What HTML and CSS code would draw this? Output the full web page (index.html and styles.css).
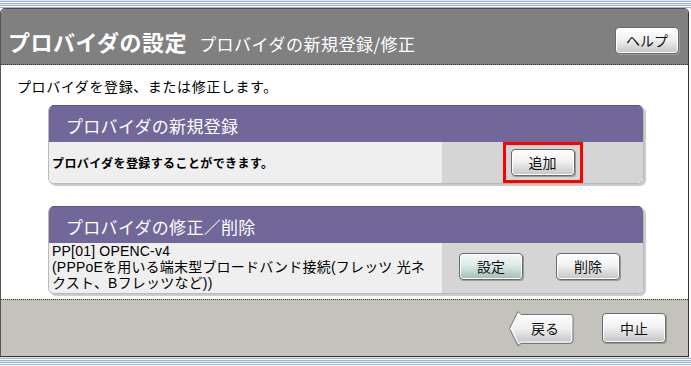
FILE: index.html
```html
<!DOCTYPE html>
<html lang="ja">

<head>
  <meta charset="UTF-8" />
  <meta name="viewport" content="width=device-width, initial-scale=1.0" />
  <title>プロバイダの設定</title>
  <link rel="stylesheet" href="styles.css">
</head>

<body>
  <div class="stripes"></div>

  <div class="window">
    <header class="head">
      <div class="titles">
        <h1>プロバイダの設定</h1>
        <span class="sub">プロバイダの新規登録/修正</span>
      </div>
      <button class="btn help">ヘルプ</button>
    </header>

    <main class="content">
      <p class="lead">プロバイダを登録、または修正します。</p>

      <section class="panel">
        <h2>プロバイダの新規登録</h2>
        <div class="row">
          <div class="info bold">プロバイダを登録することができます。</div>
          <div class="actions center">
            <span class="mark"><button class="btn">追加</button></span>
          </div>
        </div>
      </section>

      <section class="panel second">
        <h2>プロバイダの修正／削除</h2>
        <div class="row">
          <div class="info lines">
            <span>PP[01] OPENC-v4</span>
            <span>(PPPoEを用いる端末型ブロードバンド接続(フレッツ 光ネ</span>
            <span>クスト、Bフレッツなど))</span>
          </div>
          <div class="actions pair">
            <button class="btn teal">設定</button>
            <button class="btn">削除</button>
          </div>
        </div>
      </section>
    </main>

    <footer class="foot">
      <button class="back">
        <svg width="66" height="37" viewBox="0 0 66 37">
          <defs>
            <linearGradient id="g" x1="0" y1="0" x2="0" y2="1">
              <stop offset="0" stop-color="#ffffff" />
              <stop offset="0.5" stop-color="#f0f0f0" />
              <stop offset="1" stop-color="#b9b9b9" />
            </linearGradient>
          </defs>
          <path d="M1.5 18.5 L10 1.5 L13 4.5 L62 4.5 Q65 4.5 65 7.5 L65 30.5 Q65 33.5 62 33.5 L13 33.5 L10 36 Z"
            fill="url(#g)" stroke="#777" stroke-width="1" />
          <path d="M3.5 18.5 L10.5 4 L13 6 L62 6 Q63.5 6 63.5 7.5 L63.5 30.5 Q63.5 32 62 32 L13 32 L10.5 33.5 Z"
            fill="none" stroke="#fff" stroke-width="1" />
        </svg>
        <span>戻る</span>
      </button>
      <button class="btn">中止</button>
    </footer>
  </div>

  <div class="stripes"></div>
</body>

</html>
```

FILE: styles.css
```css
body {
  margin: 0;
  background-color: white;
  font-family: "Noto Sans CJK JP", "DejaVu Sans", sans-serif;
  color: #000;
}

.stripes {
  height: 8px;
  background: repeating-linear-gradient(to bottom, #dfe6f1 0, #dfe6f1 1px, #9db5db 1px, #9db5db 2px, #ffffff 2px, #ffffff 3px, #9db5db 3px, #9db5db 4px);
}

.window {
  margin-right: 2px;
  border-top: 1px solid #4a4a4a;
  border-left: 1px solid #555;
  border-right: 1px solid #333;
  border-bottom: 1px solid #333;
  border-radius: 5px 5px 0 0;
  overflow: hidden;
}

/* header */
.head {
  box-sizing: border-box;
  height: 56px;
  padding-top: 10px;
  background-color: #808080;
  border-bottom: 1px dotted #333;
  display: flex;
  align-items: center;
}

.titles {
  display: flex;
  align-items: baseline;
  gap: 12px;
  margin-left: 7px;
}

h1 {
  margin: 0;
  font-size: 22px;
  font-weight: bold;
  color: white;
  line-height: 26px;
  letter-spacing: 0.5px;
}

.sub {
  font-size: 17px;
  color: white;
  letter-spacing: 0.5px;
}

.help {
  margin-left: auto;
  margin-right: 9px;
  width: 63px;
  height: 27px;
  margin-top: -2px;
}

/* buttons */
.btn {
  width: 64px;
  height: 27px;
  padding: 0;
  border: 1px solid #6a6a6a;
  border-radius: 4px;
  background: linear-gradient(to bottom, #ffffff 0%, #f2f2f2 45%, #c4c4c4 100%);
  box-shadow: inset 0 0 0 1px #fff, 1px 1px 0 #9a9a9a;
  font-family: "Noto Sans CJK JP", sans-serif;
  font-size: 14px;
  color: #111;
  line-height: 25px;
}

.teal {
  background: linear-gradient(to bottom, #f4f8f7 0%, #dfeae8 45%, #9ebdb7 100%);
}

/* content */
.content {
  height: 234px;
  box-sizing: border-box;
  padding-top: 12px;
}

.lead {
  margin: 0 0 10px 16px;
  font-size: 14px;
  line-height: 18px;
  letter-spacing: 0.6px;
}

.panel {
  margin-left: 47px;
  width: 594px;
  border-radius: 6px;
  border: 1px solid #b9b9b9;
  border-top: none;
  box-shadow: 2px 2px 1px #c9c9c9;
  overflow: hidden;
}

.second {
  margin-top: 22px;
}

.panel h2 {
  margin: 0;
  box-sizing: border-box;
  height: 37px;
  padding: 3px 0 0 17px;
  background-color: #716799;
  border-top: 1px solid #5d5487;
  font-size: 17px;
  font-weight: normal;
  line-height: 33px;
  color: white;
  letter-spacing: 0.3px;
}

.row {
  display: grid;
  grid-template-columns: 393px 1fr;
  height: 41px;
}

.second .row {
  height: 50px;
}

.info {
  background-color: #efefef;
  padding-left: 3px;
  display: flex;
  align-items: center;
}

.bold {
  font-size: 12px;
  font-weight: bold;
  letter-spacing: 0.4px;
}

.lines {
  flex-direction: column;
  align-items: flex-start;
  justify-content: flex-start;
  font-family: "Liberation Sans", "Noto Sans CJK JP", sans-serif;
  font-size: 14px;
  line-height: 16px;
  padding-top: 0;
  letter-spacing: 0.2px;
  white-space: nowrap;
}

.actions {
  background-color: #d5d5d5;
  display: flex;
  align-items: center;
}

.center {
  justify-content: center;
  align-items: stretch;
}

.mark {
  width: 74px;
  border: 3px solid #f00;
  display: flex;
  align-items: center;
  justify-content: center;
}

.pair {
  padding-left: 17px;
  gap: 33px;
  padding-bottom: 4px;
}

/* footer */
.foot {
  height: 56px;
  border-top: 1px dotted #333;
  background-color: #c3c3bc;
  display: flex;
  align-items: center;
  justify-content: flex-end;
  gap: 28px;
  padding-right: 22px;
}

.foot .btn {
  height: 30px;
}

.back {
  position: relative;
  width: 66px;
  height: 37px;
  padding: 0;
  border: none;
  background: none;
  font-family: "Noto Sans CJK JP", sans-serif;
  font-size: 14px;
  color: #111;
}

.back svg {
  position: absolute;
  left: 0;
  top: 0;
}

.back span {
  position: relative;
  margin-left: 8px;
}
```
